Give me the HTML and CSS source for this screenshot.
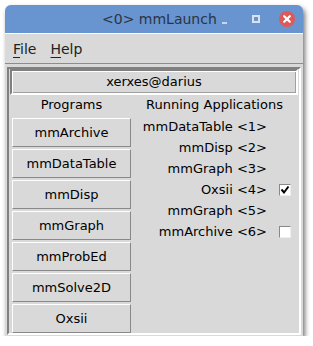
FILE: index.html
```html
<!DOCTYPE html>
<html lang="en">

<head>
  <meta charset="UTF-8">
  <title>&lt;0&gt; mmLaunch</title>
  <link rel="stylesheet" href="styles.css">
</head>

<body>
  <div class="window">
    <div class="titlebar">
      <span class="title">&lt;0&gt; mmLaunch</span>
      <span class="btn-min"></span>
      <span class="btn-max"></span>
      <span class="btn-close">
        <svg width="16" height="16" viewBox="0 0 16 16">
          <circle cx="8" cy="8" r="8" fill="#dd5a5a"/>
          <path d="M5.2 5.2 L10.8 10.8 M10.8 5.2 L5.2 10.8" stroke="#fff" stroke-width="2.2" stroke-linecap="round"/>
        </svg>
      </span>
    </div>

    <div class="menubar">
      <span class="menu"><u>F</u>ile</span>
      <span class="menu"><u>H</u>elp</span>
    </div>

    <div class="frame">
      <div class="host">xerxes@darius</div>
      <div class="columns">
        <div class="programs">
          <div class="heading">Programs</div>
          <button>mmArchive</button>
          <button>mmDataTable</button>
          <button>mmDisp</button>
          <button>mmGraph</button>
          <button>mmProbEd</button>
          <button>mmSolve2D</button>
          <button>Oxsii</button>
        </div>
        <div class="running">
          <div class="heading">Running Applications</div>
          <div class="app"><span>mmDataTable &lt;1&gt;</span><span class="slot"></span></div>
          <div class="app"><span>mmDisp &lt;2&gt;</span><span class="slot"></span></div>
          <div class="app"><span>mmGraph &lt;3&gt;</span><span class="slot"></span></div>
          <div class="app"><span>Oxsii &lt;4&gt;</span><span class="slot"><span class="check">
            <svg width="10" height="10" viewBox="0 0 10 10"><path d="M1.5 4.5 L4 7.5 L8.5 1.5" fill="none" stroke="#000" stroke-width="2"/></svg>
          </span></span></div>
          <div class="app"><span>mmGraph &lt;5&gt;</span><span class="slot"></span></div>
          <div class="app"><span>mmArchive &lt;6&gt;</span><span class="slot"><span class="check"></span></span></div>
        </div>
      </div>
    </div>
  </div>
</body>

</html>
```

FILE: styles.css
```css
body {
  margin: 0;
  background: #fff;
  font-family: "DejaVu Sans", sans-serif;
  font-size: 13px;
  color: #000;
}

.window {
  margin: 5px 0 0 5px;
  width: 298px;
  height: 331px;
  background: #d9d9d9;
  border-radius: 6px 6px 0 0;
  box-shadow: 2px 3px 5px rgba(0, 0, 0, 0.55);
  overflow: hidden;
  display: flex;
  flex-direction: column;
}

.titlebar {
  height: 28px;
  flex: none;
  background: #6895d0;
  border-bottom: 1px solid #fff;
  display: flex;
  align-items: center;
  padding-right: 8px;
}

.title {
  flex: none;
  white-space: nowrap;
  margin-left: 97px;
  font-size: 14px;
  color: #2b3345;
}

.btn-min {
  flex: none;
  margin-left: auto;
  width: 5px;
  height: 2px;
  margin-top: 8px;
  background: #c9d7ec;
}

.btn-max {
  flex: none;
  margin-left: 25px;
  width: 4px;
  height: 4px;
  border: 2px solid #d8e2f2;
}

.btn-close {
  flex: none;
  margin-left: 19px;
  height: 16px;
}

.menubar {
  height: 29px;
  flex: none;
  border-bottom: 1px solid #8c8c8c;
  display: flex;
  align-items: center;
  padding-left: 8px;
  gap: 14px;
}

.menu {
  font-size: 14px;
  color: #222;
}

.menu u {
  text-decoration-thickness: 1px;
  text-underline-offset: 3px;
}

.frame {
  flex: 1;
  margin: 3px 2px 3px 2px;
  border: 2px solid;
  border-color: #808080 #fff #fff #808080;
  padding: 0 1px;
  display: flex;
  flex-direction: column;
}

.host {
  height: 22px;
  line-height: 22px;
  text-align: center;
  border: 2px solid;
  border-color: #808080 #fff #fff #808080;
  box-shadow: inset 1px 1px 0 #fff, inset -1px -1px 0 #a0a0a0;
}

.columns {
  display: flex;
}

.heading {
  height: 21px;
  line-height: 19px;
  text-align: center;
}

.programs {
  width: 119px;
  padding-left: 2px;
  display: flex;
  flex-direction: column;
  gap: 2px;
}

button {
  font-family: "DejaVu Sans", sans-serif;
  font-size: 13px;
  color: #000;
  height: 29px;
  background: #d9d9d9;
  border: 1px solid;
  border-color: #fff #888 #888 #fff;
  padding: 0;
}

.running {
  flex: 1;
  display: flex;
  flex-direction: column;
}

.app {
  height: 21px;
  display: flex;
  align-items: center;
  justify-content: flex-end;
  padding-right: 7px;
}

.slot {
  width: 24px;
  display: flex;
  justify-content: flex-end;
}

.check {
  width: 10px;
  height: 10px;
  background: #fff;
  border: 1px solid;
  border-color: #888 #eee #eee #888;
  display: flex;
}
```
